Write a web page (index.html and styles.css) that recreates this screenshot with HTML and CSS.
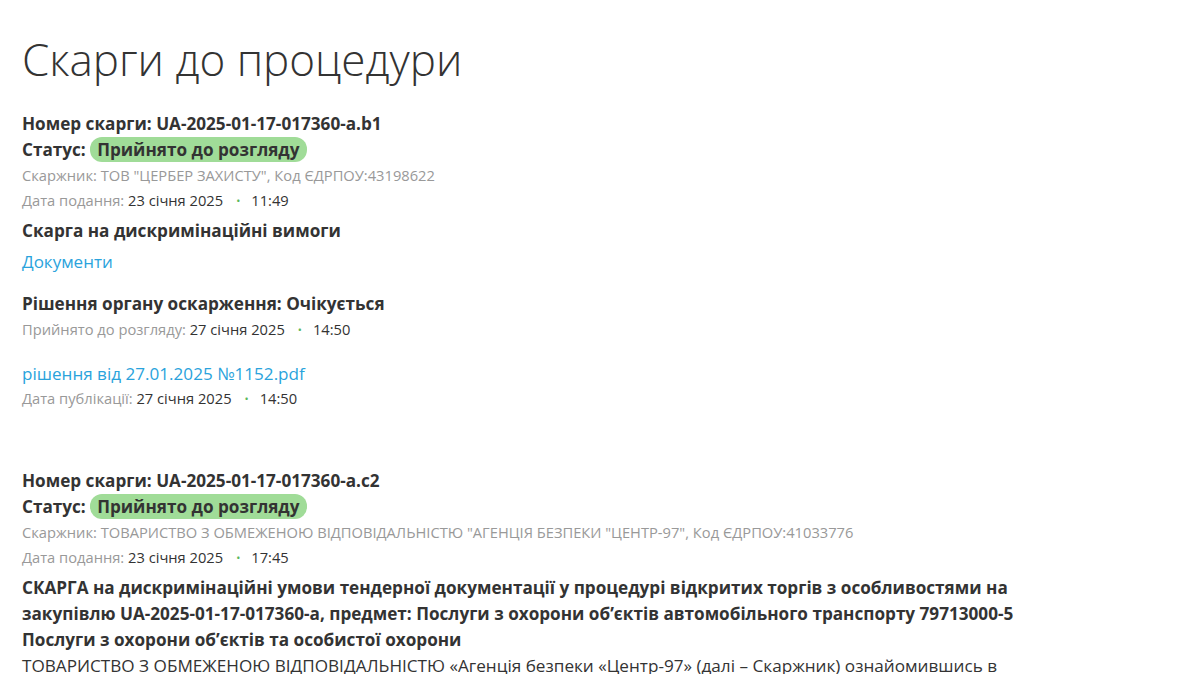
FILE: index.html
```html
<!DOCTYPE html>
<html lang="uk">
<head>
    <meta charset="UTF-8">
    <title>Скарги до процедури</title>
    <link rel="stylesheet" href="styles.css">
</head>
<body>
    <div class="page">
        <h1 class="title">Скарги до процедури</h1>

        <div class="skarga">
            <p class="nomer">Номер скарги: UA-2025-01-17-017360-a.b1</p>
            <p class="status">Статус: <span class="badge">Прийнято до розгляду</span></p>
            <p class="meta">Скаржник: ТОВ "ЦЕРБЕР ЗАХИСТУ", Код ЄДРПОУ:43198622</p>
            <p class="meta">Дата подання: <span class="val">23 січня 2025</span><span class="dot">•</span><span class="val">11:49</span></p>
            <p class="tema">Скарга на дискримінаційні вимоги</p>
            <a class="docs" href="#">Документи</a>
            <p class="rishennya">Рішення органу оскарження: Очікується</p>
            <p class="meta">Прийнято до розгляду: <span class="val">27 січня 2025</span><span class="dot">•</span><span class="val">14:50</span></p>
            <a class="file" href="#">рішення від 27.01.2025 №1152.pdf</a>
            <p class="meta">Дата публікації: <span class="val">27 січня 2025</span><span class="dot">•</span><span class="val">14:50</span></p>
        </div>

        <div class="skarga">
            <p class="nomer">Номер скарги: UA-2025-01-17-017360-a.c2</p>
            <p class="status">Статус: <span class="badge">Прийнято до розгляду</span></p>
            <p class="meta">Скаржник: ТОВАРИСТВО З ОБМЕЖЕНОЮ ВІДПОВІДАЛЬНІСТЮ "АГЕНЦІЯ БЕЗПЕКИ "ЦЕНТР-97", Код ЄДРПОУ:41033776</p>
            <p class="meta">Дата подання: <span class="val">23 січня 2025</span><span class="dot">•</span><span class="val">17:45</span></p>
            <p class="tema">СКАРГА на дискримінаційні умови тендерної документації у процедурі відкритих торгів з особливостями на закупівлю UA-2025-01-17-017360-a, предмет: Послуги з охорони об’єктів автомобільного транспорту 79713000-5 Послуги з охорони об’єктів та особистої охорони</p>
            <p class="opys">ТОВАРИСТВО З ОБМЕЖЕНОЮ ВІДПОВІДАЛЬНІСТЮ «Агенція безпеки «Центр-97» (далі – Скаржник) ознайомившись в</p>
        </div>
    </div>
</body>
</html>
```

FILE: styles.css
```css
* {
    margin: 0;
    padding: 0;
    box-sizing: border-box;
}
body {
    font-family: "Open Sans", Arial, sans-serif;
    color: #333;
    background-color: #fff;
    overflow: hidden;
}
.page {
    padding: 27px 22px 0 22px;
    width: 1070px;
}
.title {
    font-size: 44px;
    font-weight: 300;
    line-height: 64px;
    color: #333;
    margin-bottom: 20px;
}
.skarga {
    margin-bottom: 57px;
}
.nomer,
.status,
.tema,
.rishennya {
    font-size: 17.15px;
    font-weight: 700;
    line-height: 26px;
}
.badge {
    background-color: #a0dc98;
    border-radius: 12px;
    padding: 1px 7px;
}
.meta {
    font-size: 14.7px;
    line-height: 25px;
    color: #999;
}
.meta .val {
    color: #333;
}
.dot {
    color: #5cb85c;
    font-size: 11px;
    margin: 0 11px 0 13px;
    vertical-align: 1px;
}
.tema {
    margin-top: 5px;
}
.docs {
    display: block;
    font-size: 17px;
    line-height: 30px;
    color: #2aa3dc;
    text-decoration: none;
    margin-top: 3px;
    margin-bottom: 14px;
}
.file {
    display: block;
    font-size: 17.1px;
    line-height: 25px;
    color: #2aa3dc;
    text-decoration: none;
    margin-top: 19px;
}
.opys {
    font-size: 17.15px;
    line-height: 26px;
}
```
